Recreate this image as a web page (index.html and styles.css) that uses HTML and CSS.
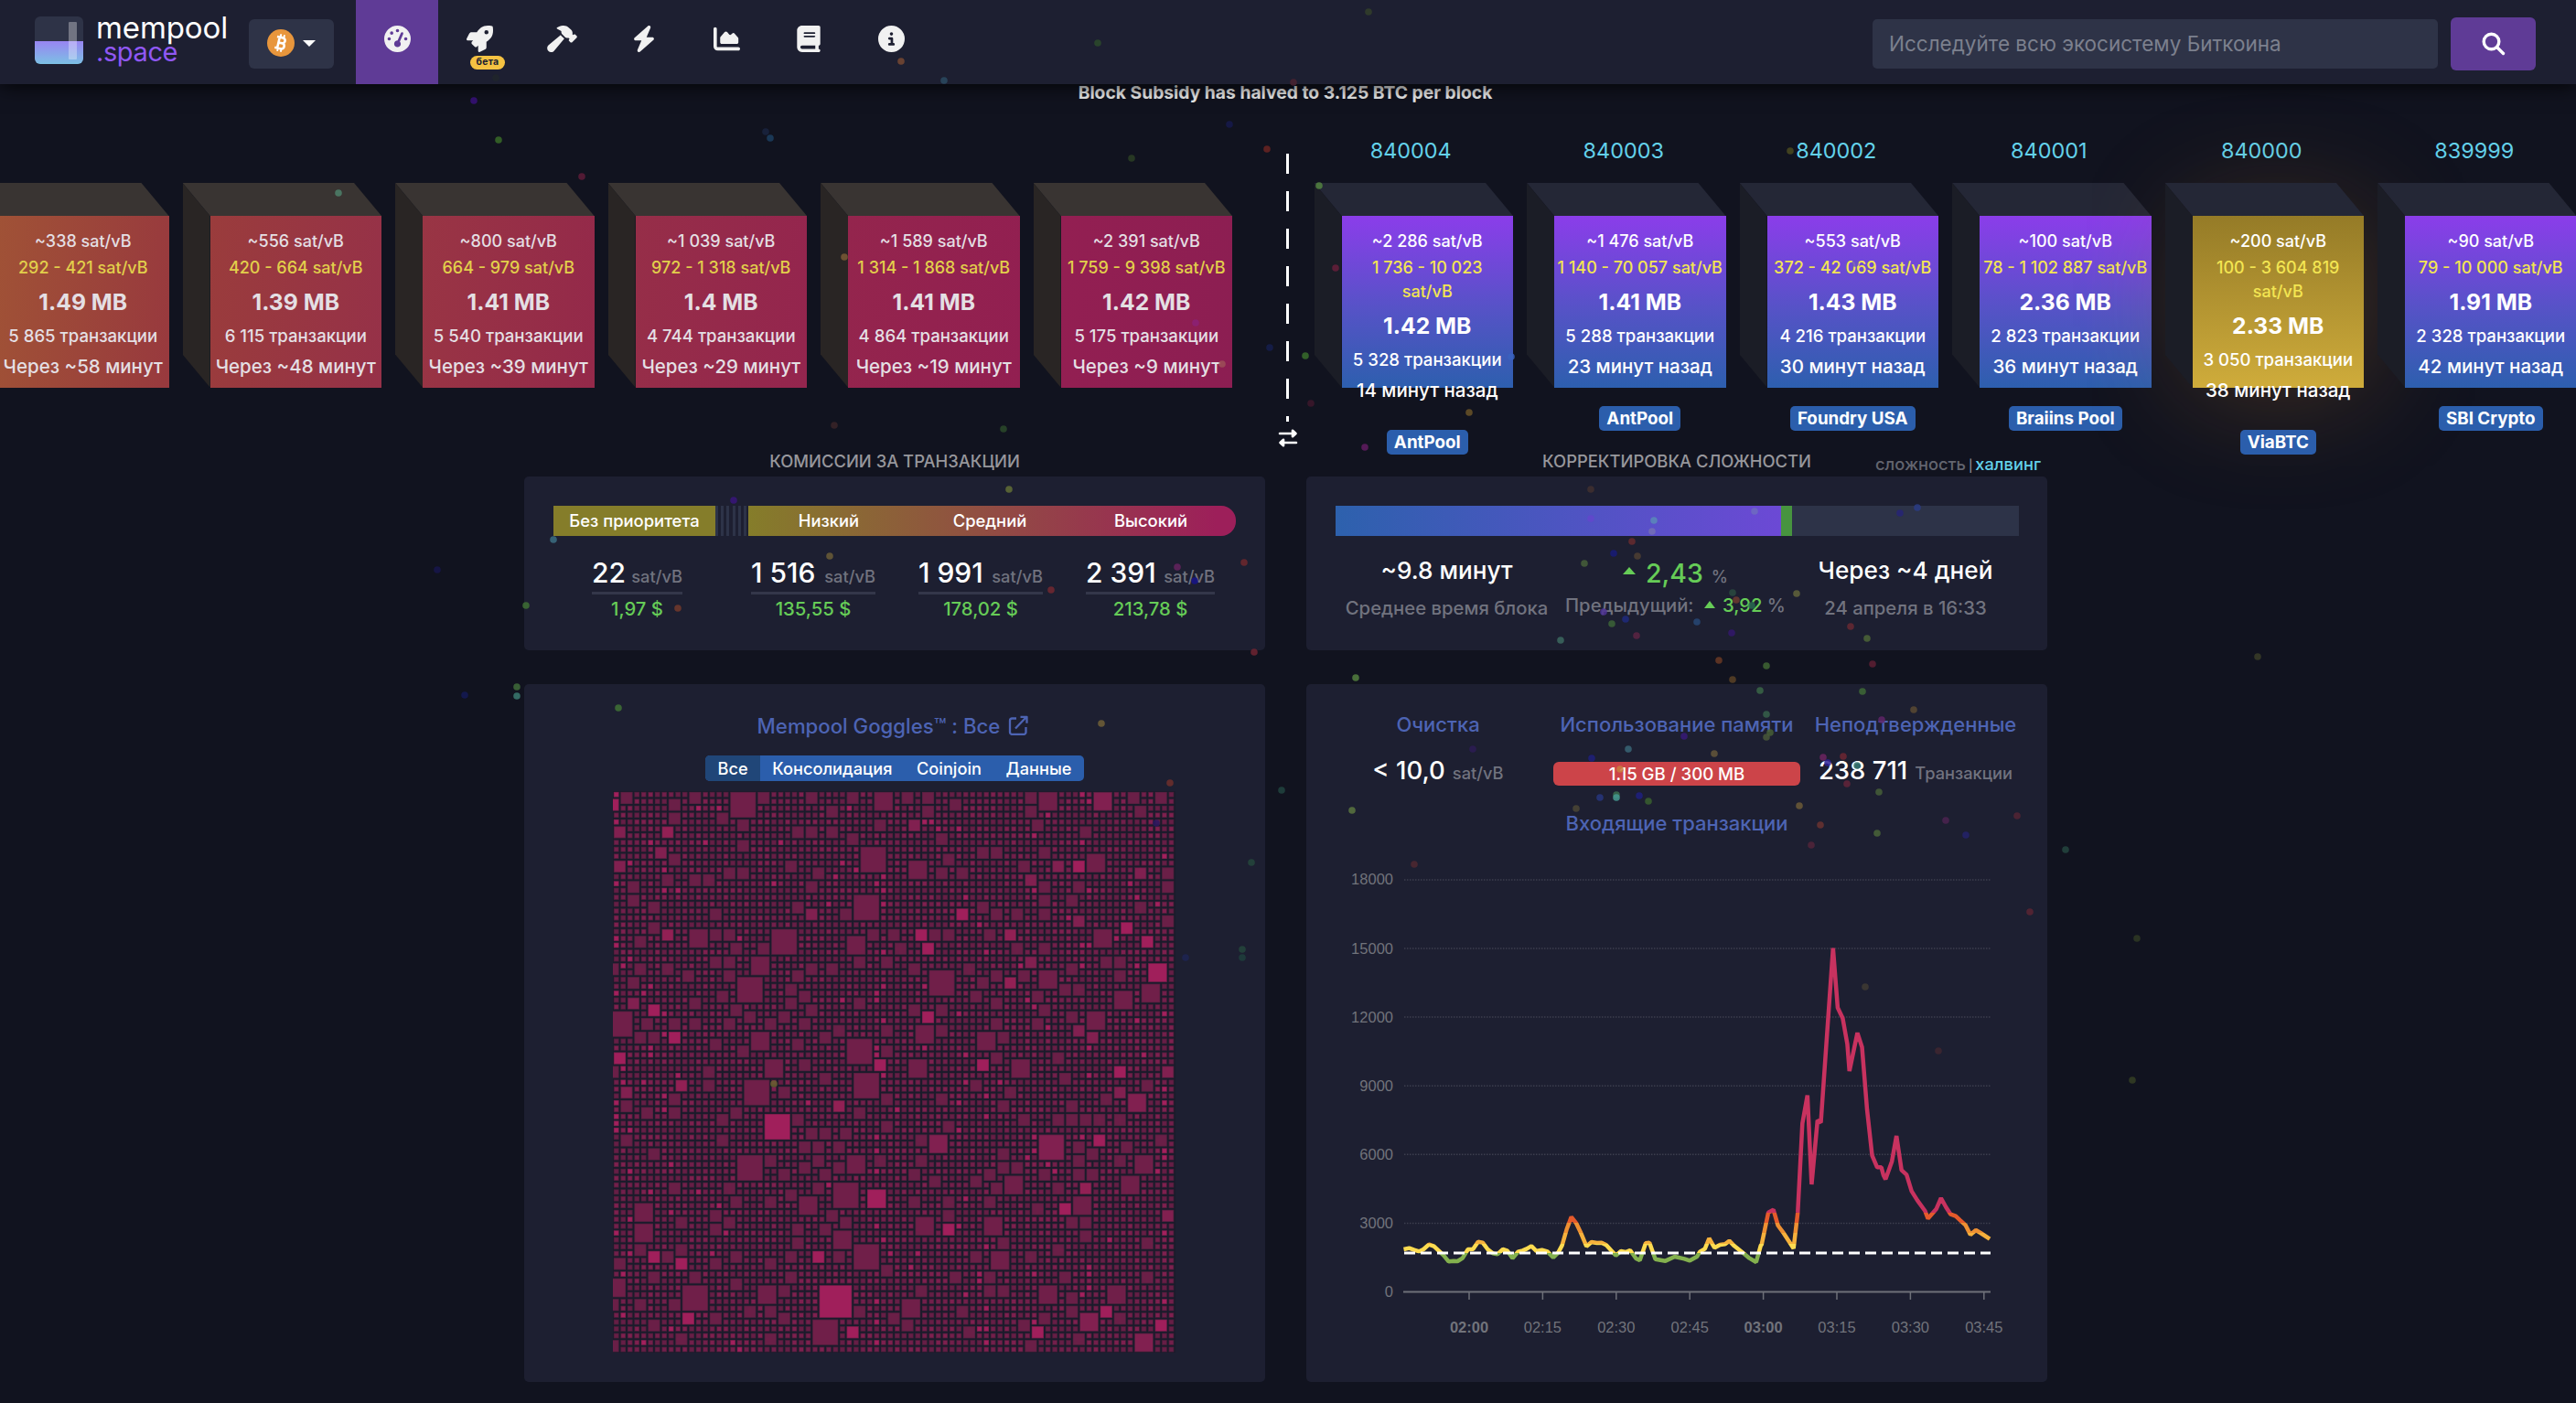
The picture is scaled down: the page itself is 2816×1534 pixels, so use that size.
FILE: index.html
```html
<!DOCTYPE html>
<html lang="ru">
<head>
<meta charset="utf-8">
<title>mempool.space</title>
<link rel="stylesheet" href="styles.css">
</head>
<body>
<header class="navbar">
  <a class="brand">
    <svg class="brand-mark" width="53" height="53" viewBox="0 0 53 53">
      <defs><linearGradient id="lg" x1="0" y1="0" x2="0" y2="1"><stop offset="0" stop-color="#9885f2"/><stop offset="1" stop-color="#7cc0e4"/></linearGradient></defs>
      <rect width="53" height="52" rx="6" fill="#2e3347"/>
      <path d="M0 27H53V46a6 6 0 0 1-6 6H6a6 6 0 0 1-6-6Z" fill="url(#lg)"/>
      <rect x="37" y="6" width="9" height="41" rx="1" fill="#fff" opacity=".32"/>
    </svg>
    <span class="brand-text"><span class="brand-top">mempool</span><span class="brand-sub">.space</span></span>
  </a>
  <button class="coin">
    <svg width="30" height="30" viewBox="0 0 30 30"><circle cx="15" cy="15" r="15" fill="#e8963c"/>
      <g transform="rotate(13 15 15)" fill="none" stroke="#fff" stroke-width="2.6"><path d="M9.5 9H16a3 3 0 0 1 0 6H12.500M12.500 15H17a3.200 3.200 0 0 1 0 6.200H9.500M12.400 9V21"/><path d="M13.200 5.500V9M17 5.500V9M13.200 21V24.500M17 21V24.500" stroke-width="1.900"/></g></svg>
    <i class="caret"></i>
  </button>
  <nav class="tabs">
    <a class="tab active"><svg width="29" height="29" viewBox="0 0 512 512"><path d="M0 256a256 256 0 1 1 512 0A256 256 0 1 1 0 256zM288 96a32 32 0 1 0 -64 0 32 32 0 1 0 64 0zM256 416c35.3 0 64-28.7 64-64c0-17.4-6.900-33.100-18.100-44.600L366 161.700c5.300-12.100-.2-26.300-12.300-31.600s-26.300 .2-31.600 12.300L257.900 288c-.6 0-1.300 0-1.900 0c-35.300 0-64 28.700-64 64s28.700 64 64 64zM176 144a32 32 0 1 0 -64 0 32 32 0 1 0 64 0zM96 288a32 32 0 1 0 0-64 32 32 0 1 0 0 64zm352-32a32 32 0 1 0 -64 0 32 32 0 1 0 64 0z"/></svg></a>
    <a class="tab"><svg width="29" height="29" viewBox="0 0 512 512"><path d="M505.120 19.090c-1.190-5.530-6.660-11-12.210-12.190C460.720 0 435.510 0 410.410 0 307.180 0 245.270 55.200 199.050 128H94.840c-16.350 0-35.560 11.880-42.890 26.480L2.520 253.300A28.400 28.400 0 0 0 0 264a24 24 0 0 0 24 24H127.820l-22.480 22.470c-11.360 11.360-13 32.260 0 45.250L156.250 406.620c11.150 11.190 32.150 13.160 45.270 0l22.480-22.470V488a24 24 0 0 0 24 24 28.560 28.560 0 0 0 10.710-2.520l98.730-49.390c14.630-7.300 26.500-26.500 26.500-42.860V312.800c72.600-46.310 128.040-108.410 128.040-211.100C512.080 76.500 512.080 51.300 505.120 19.090ZM384.040 168A40 40 0 1 1 424.050 128 40 40 0 0 1 384.040 168Z"/></svg><span class="beta">бета</span></a>
    <a class="tab"><svg width="33" height="29" viewBox="0 0 576 512"><path d="M413.500 237.500c-28.200 4.800-58.200-3.600-80-25.400l-38.100-38.100C280.400 159 272 138.800 272 117.600V105.500L192.300 62c-5.300-2.900-8.600-8.600-8.300-14.700s3.900-11.500 9.500-14l47.200-21C259.100 4.200 279 0 299.200 0h18.100c36.700 0 72 14 98.700 39.100l44.600 42c24.200 22.800 33.200 55.700 26.600 86L503 183l8-8c9.400-9.400 24.600-9.400 33.900 0l24 24c9.400 9.400 9.400 24.600 0 33.900l-88 88c-9.400 9.400-24.600 9.400-33.900 0l-24-24c-9.400-9.400-9.400-24.600 0-33.900l8-8-17.500-17.500zM27.400 377.100L260.900 182.600c3.500 4.900 7.500 9.600 11.800 14l38.100 38.100c6 6 12.400 11.200 19.200 15.700L134.900 484.600c-14.500 17.400-36 27.400-58.600 27.400C34.100 512 0 477.800 0 435.700c0-22.600 10.100-44.100 27.400-58.600z"/></svg></a>
    <a class="tab"><svg width="26" height="29" viewBox="0 0 448 512"><path d="M349.400 44.600c5.900-13.700 1.500-29.700-10.600-38.500s-28.600-8-39.900 1.800l-256 224c-10 8.800-13.600 22.900-8.900 35.300S50.700 288 64 288H175.500L98.600 467.400c-5.900 13.700-1.500 29.700 10.600 38.500s28.600 8 39.900-1.800l256-224c10-8.800 13.600-22.900 8.900-35.300s-16.600-20.700-30-20.700H272.500L349.400 44.600z"/></svg></a>
    <a class="tab"><svg width="29" height="29" viewBox="0 0 512 512"><path d="M64 64c0-17.700-14.300-32-32-32S0 46.300 0 64V400c0 44.200 35.800 80 80 80H480c17.700 0 32-14.300 32-32s-14.300-32-32-32H80c-8.800 0-16-7.200-16-16V64zm96 288H448c17.700 0 32-14.300 32-32V251.800c0-7.600-2.700-15-7.700-20.800l-65.800-76.800c-12.100-14.200-33.700-15-46.900-1.800l-21 21c-10 10-26.400 9.200-35.400-1.600l-39.200-47c-12.600-15.100-35.700-15.400-48.700-.6L135.900 215c-5.100 5.800-7.900 13.300-7.900 21.100v84c0 17.700 14.300 32 32 32z"/></svg></a>
    <a class="tab"><svg width="26" height="29" viewBox="0 0 448 512"><path d="M96 0C43 0 0 43 0 96V416c0 53 43 96 96 96H384h32c17.700 0 32-14.300 32-32s-14.300-32-32-32V384c17.700 0 32-14.300 32-32V32c0-17.700-14.300-32-32-32H384 96zm0 384H352v64H96c-17.700 0-32-14.300-32-32s14.300-32 32-32zm32-240c0-8.800 7.200-16 16-16H336c8.800 0 16 7.200 16 16s-7.200 16-16 16H144c-8.800 0-16-7.200-16-16zm16 48H336c8.800 0 16 7.200 16 16s-7.200 16-16 16H144c-8.800 0-16-7.200-16-16s7.200-16 16-16z"/></svg></a>
    <a class="tab"><svg width="29" height="29" viewBox="0 0 512 512"><path d="M256 512A256 256 0 1 0 256 0a256 256 0 1 0 0 512zM216 336h24V272H216c-13.300 0-24-10.700-24-24s10.700-24 24-24h48c13.300 0 24 10.700 24 24v88h8c13.300 0 24 10.700 24 24s-10.700 24-24 24H216c-13.300 0-24-10.700-24-24s10.700-24 24-24zm40-208a32 32 0 1 1 0 64 32 32 0 1 1 0-64z"/></svg></a>
  </nav>
  <form class="search">
    <div class="search-field">Исследуйте всю экосистему Биткоина</div>
    <div class="search-btn"><svg width="26" height="26" viewBox="0 0 26 26" fill="none" stroke="#fff" stroke-width="3.400" stroke-linecap="round"><circle cx="10.500" cy="10.500" r="8.300"/><path d="M17 17L23.500 23.500"/></svg></div>
  </form>
</header>

<div class="notice">Block Subsidy has halved to 3.125 BTC per block</div>

<section class="chain">
  <div class="pending" id="pending"></div>
  <div class="divider">
    <svg class="swap" width="22" height="20" viewBox="0 0 22 20" fill="none" stroke="#fff" stroke-width="2.600" stroke-linejoin="round" stroke-linecap="round"><path d="M2 5H19M16 1.800L19.500 5L16 8.200Z M20 15H3M6 11.800L2.500 15L6 18.200Z"/></svg>
  </div>
  <div class="mined" id="mined"></div>
</section>

<main class="dash">
  <section class="col">
    <h2 class="caption">КОМИССИИ ЗА ТРАНЗАКЦИИ</h2>
    <div class="card card-top">
      <div class="fee-bar">
        <div class="fee-none">Без приоритета</div>
        <div class="fee-sep"></div>
        <div class="fee-levels"><span>Низкий</span><span>Средний</span><span>Высокий</span></div>
      </div>
      <div class="fees">
        <div class="fee"><div class="fee-rate"><b>22</b><small>sat/vB</small></div><div class="fiat">1,97 $</div></div>
        <div class="fee"><div class="fee-rate"><b>1 516</b><small>sat/vB</small></div><div class="fiat">135,55 $</div></div>
        <div class="fee"><div class="fee-rate"><b>1 991</b><small>sat/vB</small></div><div class="fiat">178,02 $</div></div>
        <div class="fee"><div class="fee-rate"><b>2 391</b><small>sat/vB</small></div><div class="fiat">213,78 $</div></div>
      </div>
    </div>
    <div class="card card-main goggles">
      <h3 class="title">Mempool Goggles™ : Все<svg width="22" height="22" viewBox="0 0 22 22" fill="none" stroke="#4d64b4" stroke-width="2.300" stroke-linejoin="round"><path d="M9 3.500H4.500A2.500 2.500 0 0 0 2 6V18.500A2.500 2.500 0 0 0 4.500 21H17A2.500 2.500 0 0 0 19.500 18.500V13"/><path d="M8 14.500L19.500 2.500M13.500 1.800H20.500V8.800"/></svg></h3>
      <div class="filters"><span class="on">Все</span><span>Консолидация</span><span>Coinjoin</span><span>Данные</span></div>
      <canvas id="tiles" width="615" height="614"></canvas>
    </div>
  </section>

  <section class="col">
    <div class="caption-row">
      <h2 class="caption">КОРРЕКТИРОВКА СЛОЖНОСТИ</h2>
      <div class="switch">сложность <i>|</i> <a>халвинг</a></div>
    </div>
    <div class="card card-top">
      <div class="diff-bar"><div class="diff-done"></div><div class="diff-ahead"></div></div>
      <div class="diff">
        <div class="diff-item"><div class="diff-val">~9.8 минут</div><div class="diff-sub">Среднее время блока</div></div>
        <div class="diff-item"><div class="diff-val change"><i class="up"></i><b>2,43</b><small>%</small></div><div class="diff-sub prev">Предыдущий: <i class="up"></i><b>3,92</b> %</div></div>
        <div class="diff-item"><div class="diff-val">Через ~4 дней</div><div class="diff-sub">24 апреля в 16:33</div></div>
      </div>
    </div>
    <div class="card card-main incoming">
      <div class="stats">
        <div class="stat"><h3 class="title">Очистка</h3><div class="stat-val">&lt; 10,0<small>sat/vB</small></div></div>
        <div class="stat"><h3 class="title">Использование памяти</h3><div class="memory">1.15 GB / 300 MB</div></div>
        <div class="stat"><h3 class="title">Неподтвержденные</h3><div class="stat-val">238 711<small>Транзакции</small></div></div>
      </div>
      <h3 class="title chart-title">Входящие транзакции</h3>
      <svg id="chart" class="chart" width="746" height="540" viewBox="1459 930 746 540">
        <defs>
          <linearGradient id="level" gradientUnits="userSpaceOnUse" x1="0" y1="0" x2="0" y2="1200">
            <stop offset=".815" stop-color="#c8325f"/><stop offset=".815" stop-color="#e55a2b"/>
            <stop offset=".843" stop-color="#e55a2b"/><stop offset=".843" stop-color="#ee9032"/>
            <stop offset=".871" stop-color="#ee9032"/><stop offset=".871" stop-color="#f6b13c"/>
            <stop offset=".900" stop-color="#f6b13c"/><stop offset=".900" stop-color="#fddb50"/>
            <stop offset=".924" stop-color="#fddb50"/><stop offset=".924" stop-color="#83b04e"/>
          </linearGradient>
        </defs>
        <g id="axes"></g>
        <svg x="1534.500" y="1000" width="642" height="400" viewBox="75 0 1398 1200" preserveAspectRatio="none" overflow="visible">
          <polyline vector-effect="non-scaling-stroke" fill="none" stroke="url(#level)" stroke-width="4.500" stroke-linejoin="bevel" points="75,1098 88,1094 100,1100 112,1105 122,1098 135,1082 147,1088 158,1102 170,1118 182,1138 194,1136 203,1137 215,1127 228,1098 240,1097 252,1073 263,1076 275,1098 287,1111 298,1114 311,1098 322,1103 334,1127 347,1106 358,1102 368,1096 379,1087 391,1104 404,1100 417,1105 431,1125 443,1108 452,1085 463,1032 474,992 486,1013 497,1045 510,1088 522,1074 535,1077 546,1076 557,1084 569,1102 580,1118 592,1104 603,1107 614,1101 628,1128 637,1134 651,1078 660,1076 674,1130 686,1133 698,1136 720,1122 743,1129 756,1135 773,1122 780,1106 792,1096 802,1062 815,1093 828,1083 840,1081 850,1070 862,1087 885,1112 898,1127 914,1140 925,1085 927,1082 943,977 955,968 966,1020 980,1046 1003,1095 1013,977 1024,685 1036,593 1046,885 1060,675 1068,682 1097,110 1108,305 1120,340 1131,425 1136,513 1155,388 1166,435 1178,640 1190,790 1202,829 1212,829 1217,855 1222,868 1237,810 1248,726 1260,838 1272,853 1284,907 1298,938 1316,972 1323,997 1343,965 1354,930 1366,960 1377,983 1389,989 1400,1003 1412,1018 1424,1050 1437,1035 1448,1044 1470,1064"/>
        </svg>
        <path d="M1535 1370H2176" stroke="#fff" stroke-width="3" stroke-dasharray="12 6"/>
      </svg>
    </div>
  </section>
</main>
<svg class="confetti" id="confetti" width="2816" height="1534"></svg>
<script src="app.js"></script>
</body>
</html>
```
FILE: app.js
```js
// Blocks waiting to be mined: median, range, size, tx count, eta, colours
const pending = [
  ['~338', '292 - 421', '1.49 MB', '5 865', '~58', '#a05236', '#98393e'],
  ['~556', '420 - 664', '1.39 MB', '6 115', '~48', '#9a3c3c', '#963148'],
  ['~800', '664 - 979', '1.41 MB', '5 540', '~39', '#993544', '#94294a'],
  ['~1 039', '972 - 1 318', '1.4 MB', '4 744', '~29', '#962e48', '#94254e'],
  ['~1 589', '1 314 - 1 868', '1.41 MB', '4 864', '~19', '#94254d', '#921f51'],
  ['~2 391', '1 759 - 9 398', '1.42 MB', '5 175', '~9', '#931f52', '#8c1e52'],
];
const mined = [
  ['840004', '~2 286', '1 736 - 10 023', '1.42 MB', '5 328', '14', 'AntPool'],
  ['840003', '~1 476', '1 140 - 70 057', '1.41 MB', '5 288', '23', 'AntPool'],
  ['840002', '~553', '372 - 42 069', '1.43 MB', '4 216', '30', 'Foundry USA'],
  ['840001', '~100', '78 - 1 102 887', '2.36 MB', '2 823', '36', 'Braiins Pool'],
  ['840000', '~200', '100 - 3 604 819', '2.33 MB', '3 050', '38', 'ViaBTC'],
  ['839999', '~90', '79 - 10 000', '1.91 MB', '2 328', '42', 'SBI Crypto'],
];
const face = (median, range, size, txs, time) =>
  `<div class="median">${median} sat/vB</div><div class="range">${range}</div>
   <div class="size">${size}</div><div class="txs">${txs} транзакции</div><div class="time">${time}</div>`;

document.getElementById('pending').innerHTML = pending.map(b =>
  `<div class="cube soft" style="background:linear-gradient(95deg,${b[5]},${b[6]})">${face(b[0], b[1] + ' sat/vB', b[2], b[3], 'Через ' + b[4] + ' минут')}</div>`).join('');

document.getElementById('mined').innerHTML = mined.map((b, i) => {
  const wraps = i === 0 || i === 4;
  return `<div class="slot"><div class="height">${b[0]}</div><div class="cube${i === 4 ? ' gold' : ''}">
    ${face(b[1], b[2] + (wraps ? '<br>' : ' ') + 'sat/vB', b[3], b[4], b[5] + ' минут назад')}<div class="pool">${b[6]}</div></div></div>`;
}).join('');

// Transaction tiles: column, row, side, brightness level
const big = `1,0,2 11,0,2 17,0,4 21,0,2 28,0,2 34,0,2 38,0,3 42,0,2 45,0,2 60,0,2 62,0,3 70,0,3,1 75,0,2 79,0,2
-1,1,2,3 8,1,2 49,1,2 31,2,2 45,2,2 60,2,2 76,2,2 8,3,2 15,3,2 18,4,2 38,4,2 43,4,2,1 61,4,2
0,5,2,1 7,5,2,2 26,5,2 28,5,2 31,5,2 68,5,2 34,6,2 47,6,2 18,7,2 6,8,2,1 36,8,4 53,8,2 55,8,2 62,8,2
8,9,2 48,9,2 69,9,3 0,10,2,1 25,10,2 43,10,3 59,10,2 64,10,2,1 67,10,2,3 16,11,2 18,11,2 29,11,2 47,11,2 50,11,2 76,11,2,1 80,11,2
7,12,2 11,12,2 13,12,2 60,12,2,1 2,13,2 28,13,2 62,13,2 67,13,2 80,13,2 2,15,2 35,15,4 62,15,2 66,15,2
5,16,2 26,16,2 53,16,2 76,16,2 14,17,2 28,17,2,1 33,17,2 50,17,2,3 55,17,2 58,17,2 62,17,2 67,18,2,1 80,18,2
5,19,2 74,19,2,3 7,20,2,2 11,20,3 14,20,2 16,20,2 23,20,4 37,20,2 40,20,2 44,20,2,3 46,20,2 48,20,2 54,20,2 57,20,2,2 70,20,3
3,21,2 34,21,3 77,21,2,3 17,22,2 21,22,2 41,22,2 45,22,2,3 58,22,2 62,22,2 14,24,2 16,24,2 20,24,3 35,24,2 39,24,2 60,24,2,1 71,24,2 73,24,2
-1,25,2 3,25,2 7,25,2 28,25,2 31,25,2 43,25,2 51,25,2 66,25,2 78,25,3,3 10,26,2 16,26,2 26,26,2 46,26,4 55,26,2 59,26,2 62,26,3 73,26,2
2,27,2 18,27,4 53,27,2 57,27,2,2 25,28,2 65,28,2 67,28,2 77,28,3 15,29,2 27,29,2 52,29,2 61,29,2 73,29,3
2,30,2,1 11,30,2 25,30,2 35,30,2 55,30,2 5,31,2,3 17,31,2 28,31,2 43,31,2 47,31,2 62,31,2 -1,32,4 19,32,2 24,32,2 45,32,2,3 66,32,2 69,32,3
4,33,2 8,33,2 11,33,2 16,33,2 22,33,2 27,33,2 55,33,2 61,33,2 32,34,2 39,34,2 44,34,3 47,34,2 67,34,2,1
3,35,2 5,35,2 8,35,2,3 20,35,3 30,35,2 53,35,3 56,35,2 69,35,2,1 14,36,2 26,36,2 34,36,4 18,37,2 39,37,2 0,38,2,3 55,38,2 64,38,2
22,39,3 27,39,2 38,39,2,3 43,39,3 53,39,2,3 58,39,3 -1,40,2 13,40,2 73,40,2,3 80,40,2,1 30,41,2 35,41,4 65,41,2
9,42,2,2 13,42,2 19,42,4 52,42,2 77,42,2 1,43,2,1 24,43,2 57,43,2 73,43,2,1 8,44,2 39,44,2 47,44,2 71,44,2 75,44,3,1
1,45,2 32,45,2,2 56,45,2 66,45,2 4,46,2 8,46,2 17,46,2 35,46,2 15,47,2 22,47,4,3 26,47,2 59,47,2 64,47,2 66,47,2 68,47,2 70,47,2 73,47,2
39,48,2 48,48,2 28,49,2 30,49,2 33,49,2 1,50,2 15,50,2 44,50,2 46,50,3,1 62,50,4,1 70,50,2,3 79,50,2 27,51,2 29,51,2 32,51,2 67,51,2 74,51,2
5,52,2 56,52,2 69,52,2 18,53,4 22,53,2 29,53,2 34,53,3 38,53,2 44,53,2 67,53,2 73,53,2 76,53,3 27,54,2 32,54,2 56,54,2 58,54,2
24,55,2 30,55,2 43,55,2 54,55,2 62,55,2 67,55,2 69,55,2 46,56,2 52,56,2 57,56,3 74,56,3 8,57,2 16,57,2 29,57,2 32,57,4 55,57,2 64,57,2 68,57,2,2
25,58,2 37,58,3,3 17,59,2 22,59,2 27,59,3 43,59,2 48,59,2 54,59,2 67,59,3 3,60,3 61,60,2 65,60,2,3 14,61,2 31,61,2 48,61,2 80,61,2,1
9,62,2 16,62,2 33,62,2 44,62,3 54,62,3 66,62,2 68,62,2 3,63,3 14,63,2 26,63,2 30,63,2 48,63,2,3 32,64,3 68,64,2 26,65,2 56,65,2 77,65,2
3,66,2 9,66,2 35,66,4 64,66,2 5,67,2,3 7,67,2 17,67,2 25,67,2 29,67,2,3 32,67,2 52,67,2 55,67,3 60,67,2 0,68,2 9,68,2,3 14,68,2 22,68,2 39,69,2
5,70,2 11,70,2 25,70,2 49,70,2 54,70,2 65,70,2 77,70,2 -1,71,3 17,71,2 10,72,4 21,72,3 24,72,2 30,72,5,3 44,72,2 54,72,2 56,72,2 62,72,3 72,72,3 66,73,2
-1,74,2 3,74,2 8,74,2 42,74,3 19,75,2 22,75,2 35,75,2 50,75,2 66,75,2 71,75,2,3 10,76,2,3 14,76,2 24,76,2 40,76,2 62,76,2 68,76,3,1 73,76,2
5,77,2 29,77,4 42,77,2 59,77,2 79,77,2,3 34,78,2,3 51,78,2 61,78,2,3 9,79,2 22,79,2 67,79,2 76,79,3,1 -1,80,2 60,80,2`
  .split(/\s+/).map(t => t.split(',').map(Number));

const N = 82, P = 7.49, ctx = document.getElementById('tiles').getContext('2d');
ctx.fillStyle = '#1a1b2b';
ctx.fillRect(0, 0, 615, 614);
const used = new Set();
for (const [c, r, s] of big)
  for (let i = 0; i < s; i++) for (let j = 0; j < s; j++) used.add((c + i) + ':' + (r + j));

function tile(c, r, s, fill, rim) {
  const x = c * P + .9, y = r * P + .9, w = s * P - 1.8;
  ctx.fillStyle = rim; ctx.fillRect(x, y, w, w);
  ctx.fillStyle = fill; ctx.fillRect(x + .8, y + .8, w - 1.6, w - 1.6);
}
const fills = ['#6a1f47', '#812050', '#922054', '#a01f5b'];
for (const [c, r, s, l] of big)
  tile(c, r, s, l ? fills[l] : (s > 2 ? '#701f49' : fills[0]), l === 3 ? '#7c1f4c' : '#55203f');

const warm = [0, 1, 2, 5, 7, 8, 38, 39, 50, 51, 54, 61, 63, 68, 69, 76, 80];
let seed = 7;
const rnd = () => (seed = (seed * 16807) % 2147483647) / 2147483647;
for (let r = 0; r < N; r++) for (let c = 0; c < N; c++) {
  if (used.has(c + ':' + r)) continue;
  const v = rnd(), hot = warm.includes(c) ? .1 : .012;
  tile(c, r, 1, v < hot ? '#a3205d' : v < hot + .22 ? '#7e204f' : v < .6 ? '#721f4b' : '#661e46', v < hot ? '#7c1f4c' : '#4e1e3b');
}

// Chart axes
let g = '';
for (let i = 0; i < 7; i++) {
  const y = 1412.5 - i * 75.1;
  g += `<text class="tick" x="1523" y="${y + 5.5}" text-anchor="end">${i * 3000}</text>`;
  g += i ? `<path d="M1535 ${y}H2176" stroke="#3c3e4e" stroke-width="1.5" stroke-dasharray="1.5 1.5"/>`
         : `<path d="M1534 ${y}H2176" stroke="#6e7079" stroke-width="2"/>`;
}
['02:00', '02:15', '02:30', '02:45', '03:00', '03:15', '03:30', '03:45'].forEach((t, i) => {
  const x = 1606 + i * 80.4;
  g += `<path d="M${x} 1413v8" stroke="#6e7079" stroke-width="1.5"/><text class="tick${i % 4 ? '' : ' hour'}" x="${x}" y="1457" text-anchor="middle">${t}</text>`;
});
document.getElementById('axes').innerHTML = g;

// Halving confetti: x, y, colour
const dots = `985,67,774932 518,110,371079 545,153,386b28 636,193,5e1c38 370,211,4d806a 1414,90,4a2330 1344,136,161a4c 1385,163,6b2422 1237,173,2b4024
1442,203,528340 1460,293,661f3b 1307,353,8b2175 1388,380,151e4e 1427,389,386e2c 1336,398,9c5058 1433,441,3d182b 1606,451,6a5428 1652,390,3a63c0 1492,489,611c61
1103,535,616f36 802,547,38157b 605,590,3b6f82 907,608,6b5d37 1287,620,65235f 1360,615,6f282d 1306,635,17148a 1149,645,732830 575,662,3e7034 741,665,733a2c 1371,713,6f2531
1739,535,41302f 1918,559,6f6bc0 1739,567,6347cc 1808,569,5b88b8 1806,581,7470b5 2077,561,272477 2096,555,2a3c85 1784,592,672b2f 1764,605,181b78 1790,608,4f3f33 1732,616,47603a
1894,648,2a4a40 1898,656,6d3b2f 1964,649,62643b 1915,662,286a50 1753,669,4d3394 1777,677,1f2a7d 1762,682,3c6437 1855,680,274876 1789,695,5c2443 1893,692,33186c 2023,685,672932
2041,698,4c6537 1706,700,3c695f 1879,722,6a3a25 1931,728,3f6634 2047,726,5e2034 676,774,3f7235 1204,791,705f37 1279,856,6e2f2c 1264,900,2a1760 1296,1047,1d2452
1482,741,53803f 1894,743,5a4226 1924,755,3a6646 2036,756,3e6a36 1931,781,36604a 2092,776,5b4a32 2057,787,5f2567 1935,801,465f36 1931,806,49583a 1841,805,371a78 1610,819,2d1c55
1780,819,386575 1874,824,65573a 1740,829,1e207b 1993,828,6d2560 2015,827,6d2732 1998,834,2d2396 1771,841,c98040 2030,837,367a74 2019,857,63253a 2054,866,465f38 1767,869,3b6e50
1767,872,459a90 1749,872,27367e 1792,870,1f2080 1802,876,39602f 1478,886,5a763f 1723,884,4b4635 1967,881,6c5a37 1990,902,6a3330 2127,897,4b2350 2205,892,542534 2052,911,4a6538
2149,913,23226a 1980,924,52253a 1546,945,4f2830 2258,929,24473f 2219,997,5a2433 2039,1079,3f3b33 2119,1149,3f2730 846,1185,6b6030
1496,13,33402a 542,85,20262a 842,151,1c3f60 478,623,17164c 508,760,141a55 565,751,3f6c3a 565,761,3a7a70 1401,864,21443f 1368,943,24463c 1358,1038,24463c 1358,1047,1f3f3c
2468,718,3a3d28 2336,1026,2f3a24 2331,1181,354024 923,281,7a5a35 1200,47,2b4a2a 1032,88,2a4a60 912,465,3a2528 1097,469,2b4a2a 2028,288,6a50c8 1957,165,4a4a20 837,144,1a2440`.split(/\s+/);
document.getElementById('confetti').innerHTML = dots.map(d => {
  const [x, y, c] = d.split(',');
  return `<circle cx="${x}" cy="${y}" r="3.8" fill="#${c}" fill-opacity=".85"/>`;
}).join('');
```
FILE: styles.css
```css
* { box-sizing: border-box; }
html, body { margin: 0; height: 1534px; overflow: hidden; }
body { position: relative; background: #11131f; color: #fff; font-family: Inter, "Noto Sans", sans-serif; font-weight: 500; font-size: 18px; }
h2, h3 { margin: 0; font-weight: 500; }
i { font-style: normal; }

.navbar { position: relative; z-index: 2; display: flex; align-items: flex-start; height: 92px; background: #1d1f31; box-shadow: 0 0 22px #000; }
.brand { display: flex; margin: 18px 0 0 38px; width: 234px; }
.brand-text { display: flex; flex-direction: column; margin: -4px 0 0 14px; font-weight: 400; }
.brand-top { font-size: 33px; line-height: 32px; letter-spacing: -.1px; }
.brand-sub { font-size: 29px; line-height: 22px; letter-spacing: -.4px; color: #9058f5; }
.coin { display: flex; align-items: center; gap: 9px; width: 93px; height: 54px; margin: 21px 0 0; padding: 0 0 2px 20px; border: 0; border-radius: 6px; background: #2e3347; }
.caret { border: 7px solid transparent; border-top-color: #fff; border-bottom: 0; }
.tabs { display: flex; margin-left: 24px; }
.tab { position: relative; display: flex; justify-content: center; width: 90px; height: 92px; padding-top: 28px; }
.tab svg { fill: #f1f1f1; }
.tab.active { background: #5f3b96; }
.beta { position: absolute; left: 35px; top: 61px; width: 38px; height: 15px; border-radius: 8px; background: #f5c242; color: #1d1f31; font-size: 10.5px; font-weight: 700; line-height: 13px; text-align: center; letter-spacing: .2px; }
.search { display: flex; align-items: center; gap: 14px; margin: 19px 44px 0 auto; }
.search-field { width: 618px; height: 54px; padding-left: 18px; border-radius: 5px; background: #2e3347; color: #7c808e; font-size: 22.500px; line-height: 53px; font-weight: 400; }
.search-btn { display: flex; align-items: center; justify-content: center; width: 93px; height: 58px; border-radius: 6px; background: #5f3b96; }

.notice { height: 20px; margin-left: 1px; padding-right: 7px; text-align: center; font-size: 19.300px; line-height: 19px; font-weight: 700; color: #eee; }

.chain { display: flex; height: 380px; }
.pending { display: flex; justify-content: flex-end; gap: 45px; flex: 0 0 1405.500px; padding: 124px 58.500px 0 0; overflow: hidden; }
.divider { display: flex; flex-direction: column; align-items: center; flex: 0 0 3px; min-width: 0; width: 3px; padding-top: 56px; }
.divider::before { content: ""; width: 3px; height: 293px; background: repeating-linear-gradient(#fff 0 22px, transparent 22px 41px); }
.swap { flex: none; margin: 8px 0 0 2px; overflow: visible; }
.mined { display: flex; gap: 45px; flex: 1; min-width: 0; padding: 38px 0 0 58px; }
.slot { flex: 0 0 187.500px; }
.height { height: 30px; margin: 0 0 56px -36px; text-align: center; color: #63d1ea; font-size: 23.400px; font-weight: 400; line-height: 30px; }
.cube { --top: #242736; --side: #1b1d26; position: relative; flex: 0 0 187.500px; height: 187.500px; padding-top: 15px; text-align: center; white-space: nowrap; background: linear-gradient(#8b3dea, #5553c6 55%, #2d5fae); }
.cube::before { content: ""; position: absolute; left: -30px; right: 0; top: -36px; height: 36px; background: var(--top); clip-path: polygon(0 0, calc(100% - 30px) 0, 100% 100%, 30px 100%); }
.cube::after { content: ""; position: absolute; left: -30px; top: -36px; bottom: 0; width: 30px; background: var(--side); clip-path: polygon(0 0, 100% 36px, 100% 100%, 0 calc(100% - 36px)); }
.cube.soft { --top: #393432; --side: #292524; color: #e4dfe3; }
.cube.gold { background: linear-gradient(#957b27, #cfac3b); box-shadow: 0 0 130px rgba(190, 120, 40, .33); }
.median { height: 26px; font-size: 18px; line-height: 26px; }
.range { display: flow-root; margin: 3px -20px 9px; font-size: 18px; line-height: 26px; color: #f3e552; }
.soft .range { color: #e2cf4b; }
.size { height: 30px; font-size: 24.700px; line-height: 30px; font-weight: 700; }
.txs { height: 26px; margin-top: 9px; font-size: 18.600px; line-height: 26px; }
.time { height: 26px; margin: 8px -10px 0; font-size: 20.500px; line-height: 26px; }
.pool { display: inline-block; height: 27px; margin-top: 30px; padding: 0 8px; border-radius: 5px; background: #2b5eac; font-size: 18.800px; font-weight: 700; line-height: 28px; }

.dash { display: flex; gap: 45px; width: 1665px; margin-left: 573px; }
.col { flex: 1; min-width: 0; }
.caption { height: 29px; text-align: center; color: #97979c; font-size: 18.400px; line-height: 25px; }
.caption-row { display: grid; grid-template-rows: 29px; }
.caption-row > * { grid-area: 1 / 1; }
.switch { justify-self: end; padding-right: 7px; color: #63656f; font-size: 18.300px; line-height: 31px; }
.switch i { font-size: 13px; margin: 0 -2px; color: #8f919a; }
.switch a { color: #63d1ea; }
.card { background: #1d1f31; border-radius: 5px; }
.card-top { height: 190px; padding: 32px 32px 0; }
.card-main { height: 763px; margin-top: 37px; }

.fee-bar { display: flex; height: 33px; font-size: 18.400px; line-height: 32px; text-align: center; }
.fee-none { width: 177px; background: #857d2a; }
.fee-sep { width: 36px; background: repeating-linear-gradient(90deg, #2d3348 0 3px, #1d1f31 3px 6.200px); }
.fee-levels { display: flex; flex: 1; padding-right: 5px; border-radius: 0 16px 16px 0; background: linear-gradient(90deg, #857d2a, #9d1f5a 96%); }
.fee-levels span { flex: 1; }
.fees { display: grid; grid-template-columns: 99px 136px 136px 141px; justify-content: start; column-gap: 47px; padding: 19px 0 0 42px; }
.fee:not(:first-child) { position: relative; left: 28px; }
.fee-rate { display: flex; align-items: baseline; justify-content: space-between; height: 45px; border-bottom: 3px solid #34374a; line-height: 43px; white-space: nowrap; }
.fee-rate b { font-size: 30px; font-weight: 500; }
.fee-rate small, .stat-val small, .change small { font-size: 18.300px; color: #71737f; font-weight: 500; }
.fiat { text-align: center; color: #66cc57; font-size: 20.300px; line-height: 32px; }

.diff-bar { display: flex; height: 33px; margin-right: -1px; background: #2d3348; }
.diff-done { width: 487px; background: linear-gradient(90deg, #2d61ad, #6c49d5); }
.diff-ahead { width: 12px; background: #47943f; }
.diff { display: grid; grid-template-columns: 243px 257px 246px; text-align: center; padding-top: 18px; }
.diff-val { height: 40px; font-size: 26.200px; line-height: 40px; }
.diff-sub { margin-top: 6px; font-size: 20.300px; line-height: 30px; color: #71737f; white-space: nowrap; }
.up { display: inline-block; border: 7px solid transparent; border-top: 0; border-bottom: 8px solid #66cc57; vertical-align: middle; }
.change { display: flex; align-items: baseline; justify-content: center; line-height: 45px; }
.change b { font-size: 28.500px; font-weight: 500; color: #66cc57; margin: 0 9px 0 11px; }
.change .up { align-self: center; }
.prev { margin-top: 3px; }
.prev b { color: #66cc57; font-weight: 500; margin-left: 8px; }
.prev .up { margin: -4px 0 0 6px; border-left-width: 6px; border-right-width: 6px; }

.title { color: #4d64b4; font-size: 22px; line-height: 30px; white-space: nowrap; }
.goggles { display: flex; flex-direction: column; align-items: center; padding: 31px 0 0; }
.goggles .title { margin-left: -4px; font-size: 22.200px; }
.goggles .title svg { margin-left: 9px; vertical-align: -2px; }
.filters { display: flex; height: 28px; margin-top: 17px; border-radius: 5px; overflow: hidden; background: #2b5eac; font-size: 18.200px; line-height: 28px; }
.filters span { padding: 0 13.300px; }
.filters .on { background: #204678; }
#tiles { margin: 11px 0 0 -2px; }

.incoming { padding: 29px 31px 0; }
.stats { display: grid; grid-template-columns: 226px 296px 226px; text-align: center; }
.stat { display: flex; flex-direction: column; align-items: center; }
.stat-val { height: 46px; font-size: 27.500px; line-height: 46px; margin-top: 12px; white-space: nowrap; }
.stat-val small { margin-left: 8px; }
.memory { width: 270px; height: 26px; margin-top: 26px; border-radius: 6px; background: #cc4449; font-size: 18.600px; line-height: 26px; }
.chart-title { margin-top: 20px; text-align: center; }
.chart { display: block; margin-top: 15px; }
.tick { fill: #71737b; font: 400 16.500px "Liberation Sans", Arial, sans-serif; }
.tick.hour { font-weight: 700; }

.confetti { position: absolute; left: 0; top: 0; z-index: 3; pointer-events: none; }
```
